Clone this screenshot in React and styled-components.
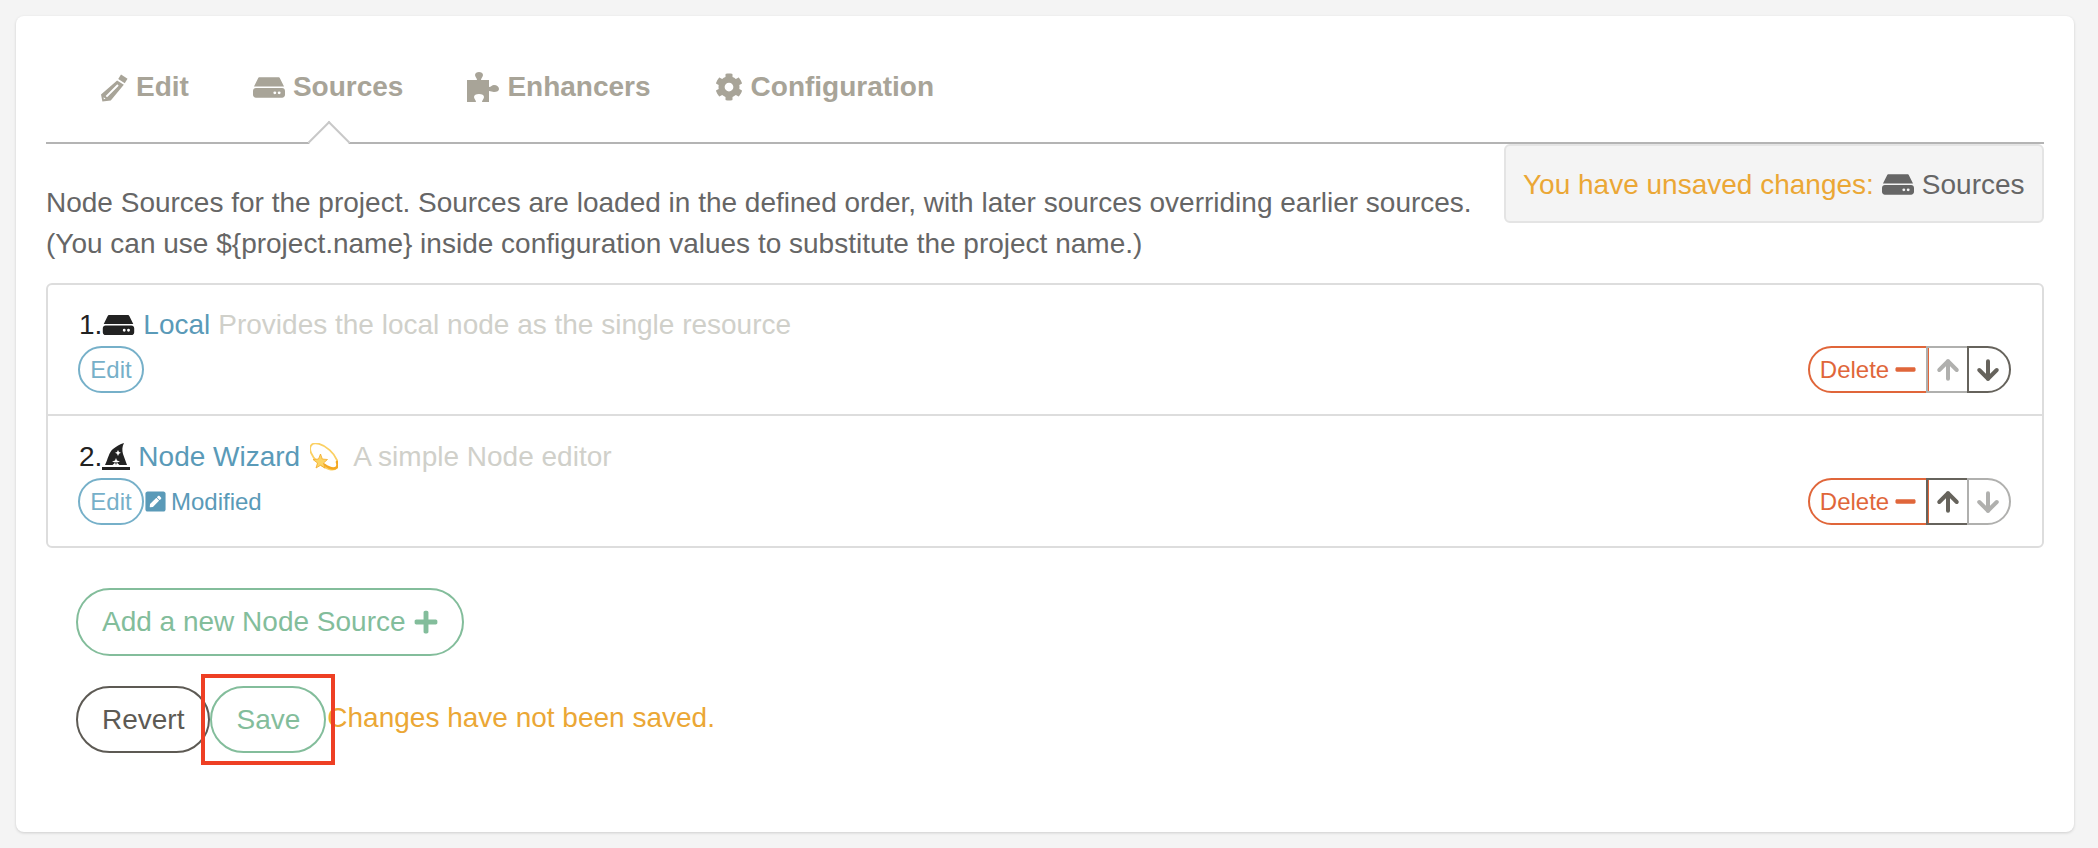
import React from 'react';
import styled, { createGlobalStyle } from 'styled-components';
import { FaCog, FaPenSquare, FaPlus, FaMinus } from 'react-icons/fa';
import { ArrowUp, ArrowDown } from 'lucide-react';

const GlobalStyle = createGlobalStyle`
  html, body {
    margin: 0;
    padding: 0;
    background: #f4f4f4;
  }
  * {
    box-sizing: border-box;
  }
  body {
    font-family: "Liberation Sans", Arial, sans-serif;
    font-size: 28px;
    line-height: 40px;
    color: #666;
  }
`;

const HddIcon = ({ width = 32, height = 21 }) => (
  <svg width={width} height={height} viewBox="0 0 33 21" fill="currentColor">
    <path d="M7 0H26C27 0 27.6 .5 28 1.400L32 9.500H1L5 1.400C5.400 .5 6 0 7 0Z" />
    <path
      fillRule="evenodd"
      d="M3 11H30C31.700 11 33 12.300 33 14V18C33 19.700 31.700 21 30 21H3C1.300 21 0 19.700 0 18V14C0 12.300 1.300 11 3 11ZM22.500 14.500A1.500 1.500 0 1 0 22.500 17.500A1.500 1.500 0 1 0 22.500 14.500ZM27 14.500A1.500 1.500 0 1 0 27 17.500A1.500 1.500 0 1 0 27 14.500Z"
    />
  </svg>
);

const PencilIcon = () => (
  <svg width="27" height="29" viewBox="0 0 29 30" fill="currentColor">
    <path d="M21.500 1L28.500 5.500L25.500 10.500L18.500 6Z" />
    <path
      fillRule="evenodd"
      d="M17.300 7.500L24.500 12L10.500 29L1.500 30L0 22.500ZM17.500 11.500L5 24L6.500 25.500L19 13ZM2.800 25.500L3 27.500L5 27.200Z"
    />
  </svg>
);

const PuzzleIcon = () => (
  <svg width="32" height="30" viewBox="0 0 32 30" fill="currentColor">
    <path d="M0 8H10C10 6 8 5 8 3C8 1 10 0 12 0C14 0 16 1 16 3C16 5 14 6 14 8H22V15C24 15 25 13 27 13C30 13 32 15 32 17C32 19 30 20 27 20C25 20 24 19 22 19V30H15C15 28 17 27 17 25C17 23 15 22 12 22C9 22 7 23 7 25C7 27 9 28 9 30H0Z" />
  </svg>
);

const WizardIcon = () => (
  <svg width="28" height="27" viewBox="0 0 28 27" fill="currentColor">
    <rect x="0" y="24" width="28" height="3" />
    <path
      fillRule="evenodd"
      d="M3 22C6 16 7 9 11 6C14 3.500 18 1 22 0C20 4 20 7 21 11L25 22H17.500L14 19L10.500 22ZM16 7L15 9L13 9.800L15 10.800L16 13L17 10.800L19 9.800L17 9ZM14 15L13 17.500L10 18.500L13 19.500L14 22L15 19.500L18 18.500L15 17.500Z"
    />
  </svg>
);

const DizzyIcon = () => (
  <svg width="28" height="28" viewBox="0 0 28 28" fill="none">
    <ellipse
      cx="14"
      cy="13.500"
      rx="17"
      ry="8.500"
      transform="rotate(42 14 13.500)"
      stroke="#fbd063"
      strokeWidth="1.800"
    />
    <path
      d="M14 21.500C19 25 24 26.500 26.500 24.500C27.500 23.500 27.800 21.500 27 19"
      stroke="#f4a923"
      strokeWidth="2.600"
      strokeLinecap="round"
    />
    <path
      d="M10.500 11L12.300 16L17.500 16.500L13.500 20L15 25L10.500 22.300L6 25L7.500 20L3 16.500L8.500 16Z"
      fill="#fcd565"
      stroke="#f3a928"
      strokeWidth="0.800"
    />
  </svg>
);

const Page = styled.div`
  padding: 16px 24px 16px 16px;
`;

const Card = styled.div`
  background: #fff;
  border-radius: 8px;
  padding: 0 30px 79px;
  box-shadow: 0 1px 3px rgba(0, 0, 0, 0.16);
`;

const TabBar = styled.nav`
  display: flex;
  gap: 64px;
  padding: 51px 0 35px 55px;
  border-bottom: 2px solid #b4b4b4;
`;

const Tab = styled.div`
  position: relative;
  display: flex;
  align-items: center;
  gap: 8px;
  font-weight: 700;
  color: #a8a498;

  ${(p) =>
    p.$active &&
    `
    &::after {
      content: "";
      position: absolute;
      left: 50%;
      bottom: -50px;
      width: 28px;
      height: 28px;
      margin-left: -14px;
      background: #fff;
      border-top: 2px solid #c8c8c8;
      border-left: 2px solid #c8c8c8;
      transform: rotate(45deg);
    }
  `}
`;

const Content = styled.div`
  position: relative;
`;

const UnsavedBox = styled.div`
  position: relative;
  float: right;
  display: flex;
  align-items: center;
  height: 79px;
  width: 540px;
  padding: 2px 0 0 17px;
  background: #f4f4f4;
  border: 2px solid #e4e4e4;
  border-radius: 6px;
  white-space: nowrap;
`;

const UnsavedLabel = styled.span`
  color: #eba735;
  margin-right: 8px;
`;

const UnsavedValue = styled.span`
  display: inline-flex;
  align-items: center;
  gap: 8px;
  color: #666;
`;

const Intro = styled.p`
  margin: 0 0 19px;
  padding-top: 38px;
  line-height: 41px;
`;

const SourceList = styled.div`
  border: 2px solid #ddd;
  border-radius: 6px;
`;

const SourceRow = styled.div`
  padding: 20px 31px 21px 30px;

  & + & {
    border-top: 2px solid #ddd;
    padding-top: 21px;
  }
`;

const SourceTitle = styled.div`
  display: flex;
  align-items: center;
  gap: 8px;
  padding: 0 0 2px 1px;
  line-height: 39px;
  white-space: nowrap;
`;

const Number = styled.span`
  display: inline-flex;
  align-items: center;
  color: #222;
`;

const SourceName = styled.span`
  color: #5a9ab8;
`;

const SourceDesc = styled.span`
  color: #d0d0ca;
`;

const Emoji = styled.span`
  display: inline-flex;
  margin: 0 7px 0 2px;
`;

const SourceActions = styled.div`
  display: flex;
  justify-content: space-between;
  align-items: center;
`;

const Left = styled.div`
  display: flex;
  align-items: center;
`;

const Pill = styled.button`
  display: inline-flex;
  align-items: center;
  justify-content: center;
  font-family: inherit;
  margin: 0;
  background: #fff;
  border: 2px solid ${(p) => p.$color};
  color: ${(p) => p.$color};
`;

const EditButton = styled(Pill)`
  height: 47px;
  width: 66px;
  padding: 0;
  font-size: 24px;
  border-radius: 24px;
`;

const ModifiedTag = styled.span`
  display: inline-flex;
  align-items: center;
  gap: 4px;
  font-size: 24px;
  color: #5a9ab8;
`;

const Group = styled.div`
  display: flex;
`;

const DeleteButton = styled(Pill)`
  height: 47px;
  width: 121px;
  padding: 0;
  gap: 5px;
  font-size: 24px;
  border-radius: 24px 0 0 24px;
`;

const UpButton = styled(Pill)`
  height: 47px;
  width: 43px;
  padding: 0;
  margin-left: -3px;
  border-radius: 0;
  background: transparent;
`;

const DownButton = styled(Pill)`
  height: 47px;
  width: 44px;
  padding: 0 3px 0 0;
  margin-left: -2px;
  border-radius: 0 24px 24px 0;
  background: transparent;
`;

const AddButton = styled(Pill)`
  height: 68px;
  margin: 40px 0 30px 30px;
  padding: 0 23px 0 24px;
  gap: 7px;
  font-size: 28px;
  border-radius: 34px;
`;

const Footer = styled.div`
  display: flex;
  align-items: center;
  margin-left: 30px;
`;

const FormButton = styled(Pill)`
  height: 67px;
  padding: 0 24px;
  font-size: 28px;
  border-radius: 34px;
`;

const Highlight = styled.div`
  position: relative;
  display: flex;

  &::after {
    content: "";
    position: absolute;
    inset: -12px -9px -12px -9px;
    border: 4px solid #ee3f24;
    pointer-events: none;
  }
`;

const SaveNote = styled.span`
  margin: -3px 0 0 1px;
  color: #eba735;
`;

const GRAY = '#66635c';
const FADED = '#b0b0ae';

const Source = ({ num, icon, name, after, desc, modified, canUp, canDown }) => (
  <SourceRow>
    <SourceTitle>
      <Number>
        {num}.{icon}
      </Number>
      <SourceName>{name}</SourceName>
      {after}
      <SourceDesc>{desc}</SourceDesc>
    </SourceTitle>
    <SourceActions>
      <Left>
        <EditButton $color="#76b0c9">Edit</EditButton>
        {modified && (
          <ModifiedTag>
            <FaPenSquare size={23} />
            Modified
          </ModifiedTag>
        )}
      </Left>
      <Group>
        <DeleteButton $color="#e0663a">
          Delete
          <FaMinus size={23} />
        </DeleteButton>
        <UpButton $color={canUp ? GRAY : FADED}>
          <ArrowUp size={30} strokeWidth={3.2} />
        </UpButton>
        <DownButton $color={canDown ? GRAY : FADED}>
          <ArrowDown size={30} strokeWidth={3.2} />
        </DownButton>
      </Group>
    </SourceActions>
  </SourceRow>
);

const App = () => {
  return (
    <Page>
      <GlobalStyle />
      <Card>
        <TabBar>
          <Tab>
            <PencilIcon />
            Edit
          </Tab>
          <Tab $active>
            <HddIcon />
            Sources
          </Tab>
          <Tab>
            <PuzzleIcon />
            Enhancers
          </Tab>
          <Tab>
            <FaCog size={28} />
            Configuration
          </Tab>
        </TabBar>
        <Content>
          <UnsavedBox>
            <UnsavedLabel>You have unsaved changes:</UnsavedLabel>
            <UnsavedValue>
              <HddIcon />
              Sources
            </UnsavedValue>
          </UnsavedBox>
          <Intro>
            Node Sources for the project. Sources are loaded in the defined order, with later sources overriding earlier sources.
            <br />
            (You can use {'${project.name}'} inside configuration values to substitute the project name.)
          </Intro>
          <SourceList>
            <Source
              num={1}
              icon={<HddIcon width={33} height={20} />}
              name="Local"
              desc="Provides the local node as the single resource"
              canDown
            />
            <Source
              num={2}
              icon={<WizardIcon />}
              name="Node Wizard"
              after={
                <Emoji>
                  <DizzyIcon />
                </Emoji>
              }
              desc="A simple Node editor"
              modified
              canUp
            />
          </SourceList>
          <AddButton $color="#83bd9b">
            Add a new Node Source
            <FaPlus size={26} />
          </AddButton>
          <Footer>
            <FormButton $color="#5d5a54">Revert</FormButton>
            <Highlight>
              <FormButton $color="#83bd9b">Save</FormButton>
            </Highlight>
            <SaveNote>Changes have not been saved.</SaveNote>
          </Footer>
        </Content>
      </Card>
    </Page>
  );
};

export default App;
